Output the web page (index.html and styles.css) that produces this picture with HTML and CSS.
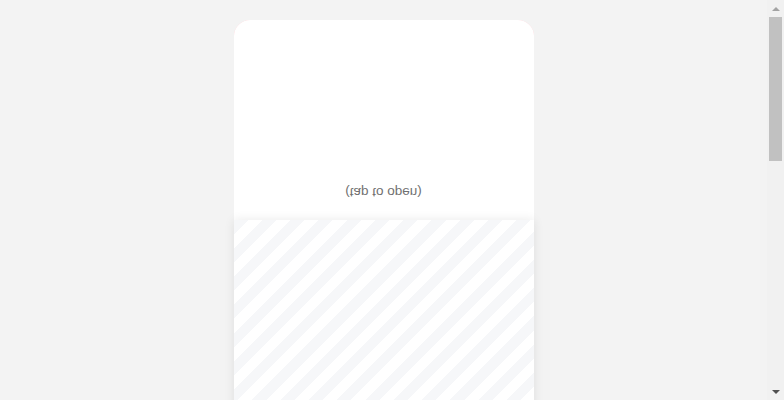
FILE: index.html
```html
<!DOCTYPE html>
<html>
<head>
<meta charset="utf-8">
<link rel="stylesheet" href="styles.css">
</head>
<body>
<div class="stage">
  <div class="card">
    <div class="flap">
      <span class="hint">(tap to open)</span>
    </div>
    <div class="body"></div>
  </div>
</div>
<div class="scrollbar">
  <div class="arrow up"></div>
  <div class="track"><div class="thumb"></div></div>
  <div class="arrow down"></div>
</div>
</body>
</html>
```
FILE: styles.css
```css
html, body {
  margin: 0;
  padding: 0;
}
body {
  background: #f3f3f3;
  font-family: "Liberation Sans", Arial, sans-serif;
}
.stage {
  display: flex;
  justify-content: center;
  padding: 20px 17px 20px 0;
}
.card {
  width: 300px;
  background: #ffc9cf;
  border-radius: 16px 16px 0 0;
  display: flex;
  flex-direction: column;
}
.flap {
  height: 200px;
  background: #ffffff;
  border-radius: 16px 16px 0 0;
  display: flex;
  align-items: flex-end;
  justify-content: center;
  padding-bottom: 20px;
  box-sizing: border-box;
}
.hint {
  display: block;
  font-size: 13.5px;
  line-height: 16px;
  color: #707070;
  transform: scaleY(-1);
}
.body {
  height: 784px;
  background-color: #ffffff;
  background-image: repeating-linear-gradient(135deg, #f6f7f9 0 10px, #ffffff 10px 20px);
  box-shadow: 0 0 10px rgba(0, 0, 0, 0.09);
}
.scrollbar {
  position: fixed;
  top: 0;
  right: 0;
  width: 17px;
  height: 100vh;
  background: #f1f1f1;
  display: flex;
  flex-direction: column;
}
.arrow {
  height: 17px;
  display: flex;
  align-items: center;
  justify-content: center;
}
.arrow::before {
  content: "";
  width: 0;
  height: 0;
  border-left: 4px solid transparent;
  border-right: 4px solid transparent;
}
.arrow.up::before {
  border-bottom: 4px solid #a3a3a3;
}
.arrow.down::before {
  border-top: 4px solid #505050;
}
.track {
  flex: 1;
}
.thumb {
  margin: 0 2px;
  height: 144px;
  background: #c1c1c1;
}
```
